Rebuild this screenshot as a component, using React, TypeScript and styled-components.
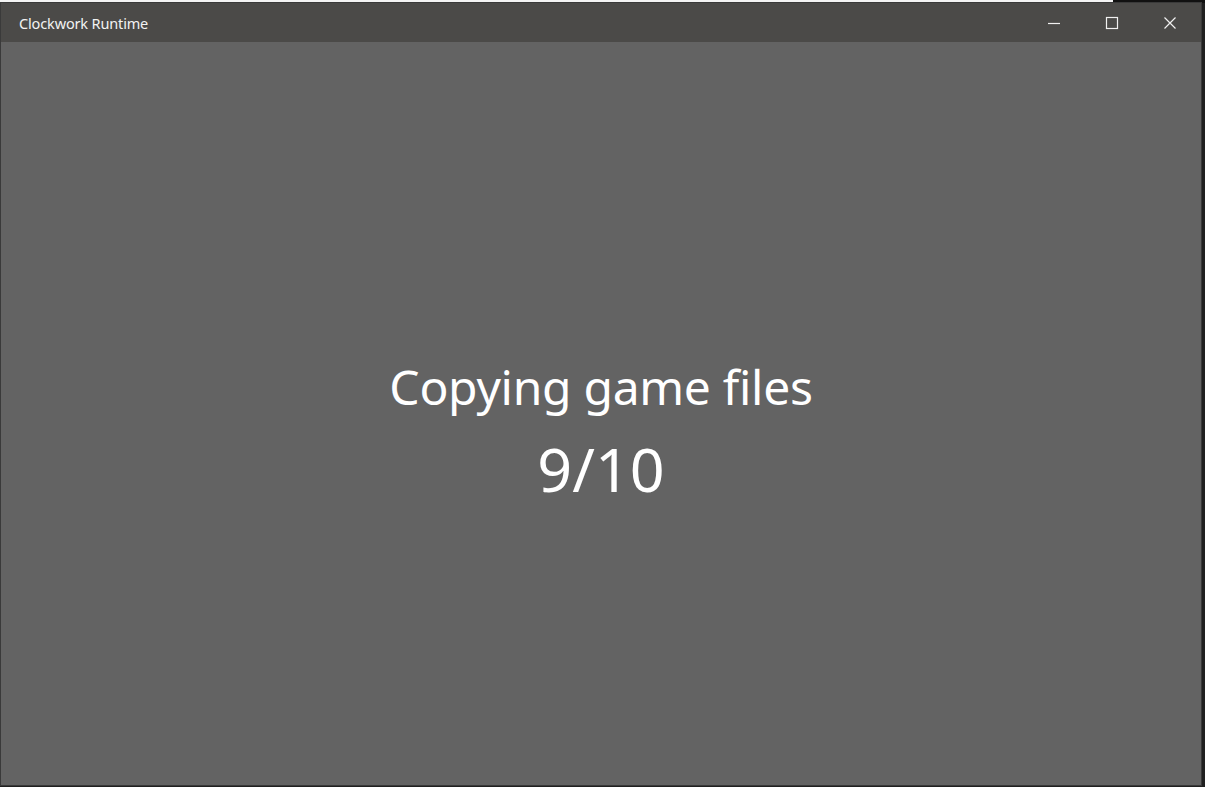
import React from "react";
import styled, { createGlobalStyle } from "styled-components";

const Global = createGlobalStyle`
  html, body { margin: 0; padding: 0; background: #1c1c1c; overflow: hidden; }
  #root { width: 1205px; height: 787px; }
`;

const Desktop = styled.div`
  position: relative;
  width: 1205px;
  height: 787px;
  background: linear-gradient(to right, #f4f4f4 0, #f4f4f4 1113px, #111 1113px, #111 100%) top / 100% 3px no-repeat, #202020;
  display: flex;
  padding: 3px 4px 2px 1px;
  box-sizing: border-box;
`;

const Window = styled.div`
  flex: 1;
  display: flex;
  flex-direction: column;
  background: #636363;
  box-shadow: 0 0 0 1px #3a3a3a;
`;

const TitleBar = styled.div`
  height: 39px;
  background: #4b4a48;
  display: flex;
  align-items: center;
  flex-shrink: 0;
  padding-right: 2px;
`;

const Title = styled.div`
  flex: 1;
  padding-left: 18px;
  color: #f2f2f2;
  font-family: "Noto Sans", "Open Sans", sans-serif;
  font-size: 14.5px;
  letter-spacing: -0.15px;
  margin-top: 1px;
`;

const CaptionButton = styled.div`
  width: 58px;
  height: 39px;
  display: flex;
  align-items: center;
  justify-content: center;
  color: #f0f0f0;
`;

const Content = styled.div`
  flex: 1;
  display: flex;
  flex-direction: column;
  align-items: center;
  justify-content: center;
  padding-top: 38px;
  font-family: "Noto Sans", "Open Sans", sans-serif;
  color: #ffffff;
`;

const Heading = styled.div`
  font-size: 48px;
  line-height: 64px;
  letter-spacing: -0.3px;
`;

const Counter = styled.div`
  font-size: 61px;
  line-height: 84px;
  margin-top: 8px;
`;

export default function App() {
  return (
    <>
      <Global />
      <Desktop>
        <Window>
          <TitleBar>
            <Title>Clockwork Runtime</Title>
            <CaptionButton>
              <svg width="14" height="14" viewBox="0 0 14 14">
                <line x1="1" y1="7.5" x2="13" y2="7.5" stroke="currentColor" strokeWidth="1.2" />
              </svg>
            </CaptionButton>
            <CaptionButton>
              <svg width="14" height="14" viewBox="0 0 14 14">
                <rect x="1.5" y="1.5" width="11" height="11" fill="none" stroke="currentColor" strokeWidth="1.2" />
              </svg>
            </CaptionButton>
            <CaptionButton>
              <svg width="14" height="14" viewBox="0 0 14 14">
                <path d="M1.5 1.5 L12.5 12.5 M12.5 1.5 L1.5 12.5" stroke="currentColor" strokeWidth="1.2" />
              </svg>
            </CaptionButton>
          </TitleBar>
          <Content>
            <Heading>Copying game files</Heading>
            <Counter>9/10</Counter>
          </Content>
        </Window>
      </Desktop>
    </>
  );
}
